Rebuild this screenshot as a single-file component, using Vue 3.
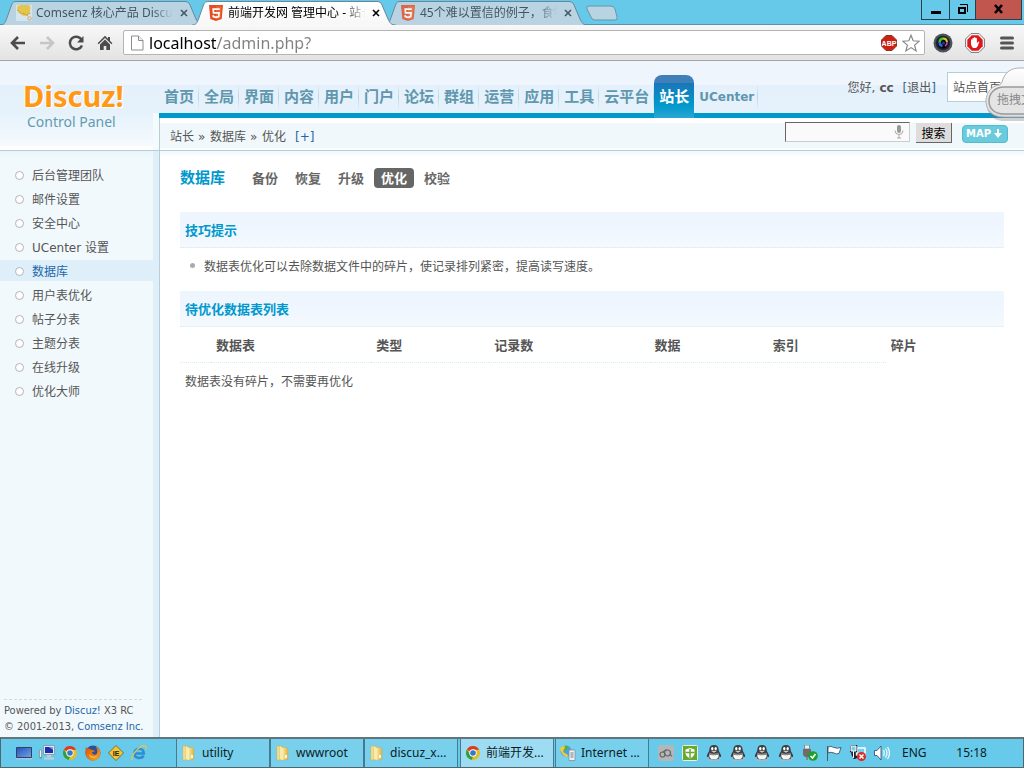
<script setup>
import { ref } from 'vue'

const browserTabs = [
  { id: 'comsenz', title: 'Comsenz 核心产品 Discuz', icon: 'note', active: false },
  { id: 'admin', title: '前端开发网 管理中心 - 站长', icon: 'html5', active: true },
  { id: 'css', title: '45个难以置信的例子，食物', icon: 'html5', active: false }
]
const navItems = ['首页', '全局', '界面', '内容', '用户', '门户', '论坛', '群组', '运营', '应用', '工具', '云平台', '站长', 'UCenter']
const menuItems = ['后台管理团队', '邮件设置', '安全中心', 'UCenter 设置', '数据库', '用户表优化', '帖子分表', '主题分表', '在线升级', '优化大师']
const subTabs = ['备份', '恢复', '升级', '优化', '校验']
const columns = ['数据表', '类型', '记录数', '数据', '索引', '碎片']
const tasks = [
  { title: 'utility', icon: 'folder' },
  { title: 'wwwroot', icon: 'folder' },
  { title: 'discuz_x...', icon: 'folder' },
  { title: '前端开发...', icon: 'chrome', active: true },
  { title: 'Internet ...', icon: 'iis' }
]
const address = ref('localhost/admin.php?')
const keyword = ref('')
</script>

<template>
  <div class="screen">
    <svg class="defs" aria-hidden="true">
      <defs>
        <linearGradient id="g-gold" x1="0" y1="0" x2="1" y2="0">
          <stop offset="0" stop-color="#fbeeb0" /><stop offset="1" stop-color="#d9b544" />
        </linearGradient>
        <linearGradient id="g-screen" x1="0" y1="0" x2="1" y2="1">
          <stop offset="0" stop-color="#2452b8" /><stop offset="1" stop-color="#6fa5ea" />
        </linearGradient>
        <linearGradient id="g-fox" x1="0" y1="0" x2="1" y2="1">
          <stop offset="0" stop-color="#d8500c" /><stop offset="1" stop-color="#f9a825" />
        </linearGradient>
        <linearGradient id="g-cloud" x1="0" y1="0" x2="0" y2="1">
          <stop offset="0" stop-color="#ffffff" /><stop offset="1" stop-color="#dcdcdc" />
        </linearGradient>
        <linearGradient id="g-tab" x1="0" y1="0" x2="0" y2="1">
          <stop offset="0" stop-color="#ffffff" /><stop offset="1" stop-color="#f7f7f7" />
        </linearGradient>
        <symbol id="i-chrome" viewBox="0 0 16 16">
          <circle cx="8" cy="8" r="7" fill="#e2bf26" />
          <path d="M8 8 1.9 4.5A7 7 0 0 1 14.1 4.7L8 4.8z" fill="#d93a2c" />
          <path d="M1.9 4.5 5.2 9.7 8 11.2 6.8 14.9A7 7 0 0 1 1.9 4.5z" fill="#2f9e49" />
          <circle cx="8" cy="8" r="3.7" fill="#fff" />
          <circle cx="8" cy="8" r="2.8" fill="#3478c8" />
        </symbol>
        <symbol id="i-folder" viewBox="0 0 16 16">
          <path d="M2 1h5v14H2z" fill="url(#g-gold)" stroke="#cfa845" stroke-width=".5" />
          <path d="M7 2.500h5l1 2v10l-6 .5z" fill="url(#g-gold)" stroke="#cfa845" stroke-width=".5" />
          <path d="m5 1 3 2v12.500L5 14z" fill="#f9eba9" />
          <path d="M10 10h2v3h-2z" fill="#eef7fd" />
        </symbol>
        <symbol id="i-html5" viewBox="0 0 14 16">
          <path d="M0 0h14l-1.300 14L7 16l-5.700-2z" fill="#e44d26" />
          <path d="M7 1.200h5.700l-1.100 11.900L7 14.700z" fill="#f16529" />
          <path d="M10.800 4.200H4.200l.3 3.700h5.600l-.4 3.700-2.700.8-2.700-.8-.1-1.500" fill="none" stroke="#fff" stroke-width="1.700" />
        </symbol>
        <symbol id="i-note" viewBox="0 0 16 16">
          <path d="M0 0h16v16H0z" fill="#dceaf2" />
          <path d="M1.500 1 5 0h8l1.500 2-.5 5-3 3.500-3.500.5L3 8 1 4z" fill="#f0c428" />
          <path d="m1 5 4.500 3.500H8l4 2.500" fill="none" stroke="#c99b23" />
          <path d="M11 9.500 14.500 8" stroke="#c99b23" fill="none" />
          <circle cx="13.500" cy="13.500" r="1.700" fill="none" stroke="#dc9a44" />
        </symbol>
        <symbol id="i-penguin" viewBox="0 0 16 16">
          <path d="M8 0C4.800 0 3.400 2 3.400 4.500c0 2.400-2.400 4-2.600 7 .2 1 1 .7 1.700-.2C3 14.700 5 15 8 15s5-.3 5.500-3.700c.7.900 1.500 1.200 1.700.2-.2-3-2.600-4.600-2.600-7C12.600 2 11.200 0 8 0z" fill="#3c3e40" />
          <path d="M3.600 9c1 1.300 7.800 1.300 8.800 0 1 3-.5 5.500-4.400 5.500S2.600 12 3.600 9z" fill="#f4f4f4" />
          <ellipse cx="6.300" cy="3.600" rx="1.200" ry="1.600" fill="#fff" /><ellipse cx="9.700" cy="3.600" rx="1.200" ry="1.600" fill="#fff" />
          <path d="M4.700 5.800h6.600L8 7.700z" fill="#c9cccd" />
          <path d="M3.300 7.600c2 1.400 7.400 1.400 9.400 0v1.700c-2 1.300-7.400 1.300-9.400 0z" fill="#878a8c" />
          <path d="M2 14.200h5v1.800H3zM9 14.200h5l-1 1.800H9z" fill="#b4b6b8" />
        </symbol>
      </defs>
    </svg>

    <header class="titlebar">
      <div class="tabs">
        <div v-for="tab in browserTabs" :key="tab.id" class="tab" :class="{ current: tab.active }">
          <svg class="tab-shape" viewBox="0 0 204 25" preserveAspectRatio="none" aria-hidden="true">
            <path d="M0 25C4 25 5 23 6.500 19L11.500 5C12.500 2 14 1.500 17 1.500H184C187 1.500 189 2 190 5L196 19C198 23 199 25 204 25" />
          </svg>
          <svg class="i16"><use :href="'#i-' + tab.icon" /></svg>
          <a href="#" class="tab-title">{{ tab.title }}</a>
          <button class="tab-close" aria-label="关闭标签页">
            <svg width="8" height="8" viewBox="0 0 8 8"><path d="m1 1 6 6M7 1 1 7" stroke="currentColor" stroke-width="1.600" /></svg>
          </button>
        </div>
        <button class="new-tab" aria-label="新标签页">
          <svg width="32" height="16" viewBox="0 0 32 16"><path d="M3 1h22q3 0 4 3l2 8q1 3-2 3H9q-3 0-4-3L1 4q-1-3 2-3z" fill="#b8d4e3" stroke="#6796ab" /></svg>
        </button>
      </div>
      <div class="window-buttons">
        <button class="win min" aria-label="最小化"><svg width="12" height="12"><path d="M1 8h10v3H1z" /></svg></button>
        <button class="win max" aria-label="还原"><svg width="12" height="12"><path d="M2 5h6v5H2z" fill="none" stroke="#000" stroke-width="2" /><path d="M3 1.500h7.500V9" fill="none" stroke="#000" /></svg></button>
        <button class="win shut" aria-label="关闭"><svg width="12" height="12"><path d="m2 2 7 8m0-8-7 8" stroke="#000" stroke-width="2.600" /></svg></button>
      </div>
    </header>

    <div class="toolbar">
      <button class="tool" aria-label="后退"><svg width="16" height="14" viewBox="0 0 16 14"><path d="M15 7H2M8 1 2 7l6 6" fill="none" stroke="#4c4c4c" stroke-width="2.600" /></svg></button>
      <button class="tool" aria-label="前进"><svg width="16" height="14" viewBox="0 0 16 14"><path d="M1 7h13M8 1l6 6-6 6" fill="none" stroke="#c6c6c6" stroke-width="2.600" /></svg></button>
      <button class="tool" aria-label="刷新"><svg width="16" height="16" viewBox="0 0 16 16"><path d="M13.500 4.500A6.300 6.300 0 1 0 14 10.500" fill="none" stroke="#4c4c4c" stroke-width="2.500" /><path d="M15.500 1v6.500H9z" fill="#4c4c4c" /></svg></button>
      <button class="tool" aria-label="主页"><svg width="16" height="16" viewBox="0 0 16 16"><path d="M8 .8.6 8.300l1 1L8 3l6.400 6.300 1-1L13 5.800V2h-2v1.800z" fill="#4c4c4c" /><path d="m8 4.500-5 5V15h3.700v-4h2.600v4H13V9.500z" fill="#4c4c4c" /></svg></button>
      <div class="omnibox">
        <svg width="14" height="16" viewBox="0 0 14 16" aria-hidden="true"><path d="M1.500 1h7L13 5.500V15H1.500z" fill="#fff" stroke="#8d8d8d" /><path d="M8.500 1v4.500H13" fill="#eee" stroke="#8d8d8d" /></svg>
        <input v-model="address" class="address" type="text" aria-label="地址" />
        <button class="plain" aria-label="广告拦截"><svg width="16" height="16" viewBox="0 0 16 16"><path d="M5 .5h6L15.500 5v6L11 15.500H5L.5 11V5z" fill="#cf2113" stroke="#8e3029" /><text x="8" y="10.500" text-anchor="middle" class="abp">ABP</text></svg></button>
        <button class="plain" aria-label="收藏"><svg width="18" height="18" viewBox="0 0 18 18"><path d="m9 1.200 2.200 5.600 6 .4-4.600 3.900 1.500 5.800L9 13.600l-5.100 3.300 1.500-5.800L.8 7.200l6-.4z" fill="#fff" stroke="#888" stroke-width="1.200" /></svg></button>
      </div>
      <button class="tool ext" aria-label="截图"><svg width="20" height="20" viewBox="0 0 20 20"><circle cx="10" cy="10" r="9.500" fill="#4d545b" /><circle cx="10" cy="10" r="7.300" fill="#23272d" /><circle cx="10" cy="10" r="5.500" fill="#05060a" /><path d="M6.500 9a4 4 0 0 1 3.500-3.500" stroke="#41c430" stroke-width="2.500" fill="none" /><path d="M10 5.500A4 4 0 0 1 14 9" stroke="#d6d02a" stroke-width="2" fill="none" /><path d="M14 9a4 4 0 0 1-2 4" stroke="#dc3ab0" stroke-width="1.500" fill="none" /><path d="M6.500 9a4 4 0 0 0 3 4" stroke="#2e68dc" stroke-width="2.500" fill="none" /><circle cx="10.500" cy="10" r="1.500" fill="#173f86" /></svg></button>
      <button class="tool ext" aria-label="AdBlock"><svg width="20" height="20" viewBox="0 0 20 20"><path d="M6 .6h8L19.400 6v8L14 19.400H6L.6 14V6z" fill="#fff" stroke="#777" /><path d="M6.700 2.300h6.600l4.400 4.400v6.600l-4.400 4.400H6.700l-4.400-4.400V6.700z" fill="#e0161a" /><path d="M6 10.500V6.700q.9-1 1.400 0V9V5.200q.8-1 1.500 0v3.300-4q.8-1 1.500 0v4-3.300q.8-1 1.500 0v5l1.300-1.500q1-.4 1.100.4L12.500 13.500 11 15H8q-2-1.500-2-4.500z" fill="#fff" /></svg></button>
      <button class="tool ext" aria-label="菜单"><svg width="14" height="14"><path d="M1.500 2h11M1.500 7h11m-11 5h11" stroke="#555" stroke-width="3" stroke-linecap="round" /></svg></button>
    </div>

    <div class="page">
      <div class="head">
        <div class="brand">
          <a href="#" class="logo">Discuz!</a>
          <span class="logo-sub">Control Panel</span>
        </div>
        <div class="head-main">
          <div class="head-top">
            <nav class="nav">
              <a v-for="item in navItems" :key="item" href="#" :class="{ on: item === '站长', latin: item === 'UCenter' }">{{ item }}</a>
            </nav>
            <p class="user">您好, <b>cc</b><a href="#">[<span>退出</span>]</a></p>
            <a href="#" class="site-home">站点首页</a>
          </div>
          <div class="crumb-bar">
            <p class="crumbs"><span>站长</span><i>»</i><span>数据库</span><i>»</i><span>优化</span><a href="#">[+]</a></p>
            <form class="search" @submit.prevent>
              <span class="search-box">
                <input v-model="keyword" type="text" aria-label="搜索关键词" />
                <svg width="10" height="14" viewBox="0 0 10 14" aria-hidden="true"><rect x="3" y="0" width="4" height="8" rx="2" fill="#999" /><path d="M1 5.500q0 4 4 4t4-4M5 9.500V13M3 13h4" fill="none" stroke="#aaa" /></svg>
              </span>
              <button class="search-btn">搜索</button>
              <button type="button" class="map">MAP<svg width="10" height="10"><path d="M4 0h2v4h3L5 9 1 4h3z" fill="#fff" /></svg></button>
            </form>
          </div>
        </div>
      </div>

      <div class="body">
        <aside class="side">
          <ul class="menu">
            <li v-for="item in menuItems" :key="item" :class="{ on: item === '数据库' }"><a href="#">{{ item }}</a></li>
          </ul>
          <p class="copy">Powered by <a href="#">Discuz!</a> X3 RC<br />© 2001-2013, <a href="#">Comsenz Inc.</a></p>
        </aside>
        <main class="main">
          <div class="title-row">
            <h1>数据库</h1>
            <nav class="sub">
              <a v-for="t in subTabs" :key="t" href="#" :class="{ on: t === '优化' }">{{ t }}</a>
            </nav>
          </div>
          <h2>技巧提示</h2>
          <ul class="tips"><li>数据表优化可以去除数据文件中的碎片，使记录排列紧密，提高读写速度。</li></ul>
          <h2>待优化数据表列表</h2>
          <table>
            <colgroup><col class="c0" /><col class="wide" /><col /><col class="wide" /><col /><col /><col /></colgroup>
            <thead><tr><th></th><th v-for="c in columns" :key="c" scope="col">{{ c }}</th></tr></thead>
            <tbody><tr><td colspan="7">数据表没有碎片，不需要再优化</td></tr></tbody>
          </table>
        </main>
      </div>

      <div class="drop-cloud">
        <svg width="48" height="62" viewBox="0 0 48 62" aria-hidden="true">
          <path d="M22 14C25 6 31 4 39 4H48V53H21C8 53 4 44 4 37C4 27 11 21 19 20Q20 17 22 14z" fill="#777" opacity=".35" transform="translate(0 3)" />
          <path d="M19 17C22 6 29 3 37 3H48V52H21C8 52 3 44 3 36C3 27 10 20 17 20z" fill="url(#g-cloud)" stroke="#b0b0b0" />
          <path d="M48 22H21C12 22 6 28 6 36S12 49 21 49H48" fill="#e4e4e4" stroke="#999" stroke-width="1.500" />
        </svg>
        <span>拖拽文</span>
      </div>
    </div>

    <footer class="taskbar">
      <div class="quick">
        <button class="plain" aria-label="显示桌面"><svg class="i16" viewBox="0 0 16 16"><path d="M.5 2.500h15v10H.5z" fill="url(#g-screen)" stroke="#33415c" /><path d="M0 13h16v1.500H0z" fill="#a9c5e5" /></svg></button>
        <button class="plain" aria-label="网络"><svg class="i16" viewBox="0 0 16 16"><path d="M4.500.5h11v9h-11z" fill="#dfe6ee" stroke="#8f9eb0" /><path d="M6 2h8v6H6z" fill="#1c2fa8" /><path d="M10 2h4v3z" fill="#7f95ea" /><path d="M8 10h4v2H8zM5 12.500h10v2H5z" fill="#c5cdd6" /><path d="M.5 5h2v8h-2z" fill="#eef1f4" stroke="#6b7d8d" stroke-width=".6" /><path d="M1 12h2v1H1z" fill="#38b845" /></svg></button>
        <button class="plain" aria-label="Chrome"><svg class="i16"><use href="#i-chrome" /></svg></button>
        <button class="plain" aria-label="Firefox"><svg class="i16" viewBox="0 0 16 16"><circle cx="8" cy="8" r="7.500" fill="#2c4f96" /><path d="M1 2c.5 1.500 1.500 1.500 3 1.500C6 5 9 5 10 6c-1 1-2 .8-3 1.500.5 2.500 3.500 3 5 1C13 6 12 3 10.500 1.500c3.500 1 5 4 5 7A7.500 7.500 0 0 1 .5 8C.3 5.500.5 3.500 1 2z" fill="url(#g-fox)" /><path d="M4 8.500c1 3 5 4.500 8 2-1.500 4-8 3.500-8-2z" fill="#f6c238" /></svg></button>
        <button class="plain" aria-label="IETester"><svg class="i16" viewBox="0 0 16 16"><path d="m8 .5 7.500 7.500L8 15.500.5 8z" fill="#f7c52c" stroke="#5c4a17" stroke-width=".7" /><text x="8" y="10.500" text-anchor="middle" class="ie-mark">IE</text></svg></button>
        <button class="plain" aria-label="Internet Explorer"><svg class="i16" viewBox="0 0 16 16"><path d="M3.500 8.500h9.300c0-6.300-9.300-6.300-9.300 0 0 5.500 7.500 5.500 9 1.900" fill="none" stroke="#2b8fd6" stroke-width="2.600" /><path d="M1.500 15C-1 12 8-.5 14.500 1c1 .5.800 2 .3 3" fill="none" stroke="#f0c447" stroke-width="1.300" /></svg></button>
      </div>
      <div class="tasks">
        <button v-for="t in tasks" :key="t.title" class="task" :class="{ current: t.active }">
          <svg v-if="t.icon !== 'iis'" class="i16"><use :href="'#i-' + t.icon" /></svg>
          <svg v-else class="i16" viewBox="0 0 16 16"><circle cx="6" cy="6" r="5.500" fill="#4aa2dc" /><path d="M2 3q4-4 7-1L5 6z" fill="#58ad3f" /><path d="M0 4q3-5 5-2L3 7l5 3-1 2Q2 11 0 4z" fill="#f1cc35" /><path d="M9 5h6v10.500H9z" fill="#eef0f2" stroke="#83909c" stroke-width=".8" /><path d="M10.500 8h3m-3 2h3m-3 2h3" stroke="#6c7b88" /></svg>
          <span>{{ t.title }}</span>
        </button>
      </div>
      <div class="tray">
        <svg class="i16" viewBox="0 0 16 16"><rect width="16" height="16" rx="2" fill="#b4b7b8" /><circle cx="4.500" cy="9.500" r="2.500" fill="none" stroke="#666" stroke-width="1.200" /><circle cx="9.500" cy="8" r="3" fill="none" stroke="#666" stroke-width="1.200" /><path d="M5 7 8.500 4.500M12 9l2 2.500" fill="none" stroke="#666" stroke-width="1.200" /></svg>
        <svg class="i16" viewBox="0 0 16 16"><rect x=".5" y=".5" width="15" height="15" rx="1" fill="#68a82f" stroke="#e6f3d7" /><path d="M3.500 4.500 8 3l4.500 1.500V8q0 3-4.500 5.500Q3.500 11 3.500 8z" fill="#fff" /><path d="M8 4v9M3.500 7.500h9" stroke="#68a82f" stroke-width="1.500" /></svg>
        <svg v-for="n in 4" :key="n" class="i16"><use href="#i-penguin" /></svg>
        <svg class="i16" viewBox="0 0 16 16"><path d="M2.500 0h5v4h-5z" fill="#eee" stroke="#777" stroke-width=".8" /><path d="M1 4h8v6l-2 2H3l-2-2z" fill="#6d6d6d" /><path d="M4 12h2v3H4z" fill="#888" /><circle cx="11" cy="11" r="4.800" fill="#1f9e2d" /><path d="m8.500 11 2 2 3-4" fill="none" stroke="#fff" stroke-width="1.500" /></svg>
        <svg class="i16" viewBox="0 0 16 16"><path d="M1.500 1v15M2 2q3-1.500 6 .5 3 1.500 7 0l-2 6q-3 1-5-.5-3-1.500-6 0z" fill="#fff" stroke="#345" stroke-width=".8" /></svg>
        <svg class="i16" viewBox="0 0 16 16"><path d="M7 3h8v7H7z" fill="#76cfea" stroke="#fff" stroke-width="1.500" /><path d="M1 1h5v5H4.500v8M2.500 6v3q0 3 6 3M1 1v5h3" fill="none" stroke="#223" stroke-width="2.400" /><path d="M1 1h5v5H1zM3.500 6v7" fill="#76cfea" stroke="#fff" stroke-width="1" /><circle cx="11.500" cy="11.500" r="4.500" fill="#dc2b27" /><path d="m9.500 9.500 4 4m0-4-4 4" stroke="#fff" stroke-width="1.500" /></svg>
        <svg class="i16" viewBox="0 0 16 16"><path d="M.5 5.500H3l4-4.500v14L3 10.500H.5z" fill="#fff" stroke="#345" stroke-width=".8" /><path d="M9.500 5q1.500 3 0 6M11.500 3.500q3 4.500 0 9M13.500 2q4 6 0 12" fill="none" stroke="#f6fbfd" stroke-width="1.200" /></svg>
        <span class="lang">ENG</span>
        <time class="clock">15:18</time>
      </div>
    </footer>
  </div>
</template>

<style>
body { margin: 0; }
</style>

<style scoped>
.screen {
  position: relative;
  display: flex;
  flex-direction: column;
  min-height: 100vh;
  overflow: hidden;
  background: #fff;
  color: #555;
  font: 12px/16px "DejaVu Sans", "Noto Sans CJK SC", sans-serif;
}
.screen * { box-sizing: border-box; }
.defs { position: absolute; width: 0; height: 0; }
a { color: inherit; text-decoration: none; }
p, ul, h1, h2 { margin: 0; padding: 0; list-style: none; }
button { padding: 0; border: 0; background: none; font: inherit; color: inherit; }
svg { flex: none; display: block; }
.i16 { width: 16px; height: 16px; }

.titlebar { display: flex; justify-content: space-between; height: 25px; background: #67c9ea; border-bottom: 1px solid #5795ab; }
.tabs { display: flex; }
.tab { position: relative; display: flex; align-items: center; width: 204px; height: 25px; margin-right: -12px; padding: 1px 16px 0; color: #44565f; }
.tab.current { z-index: 1; color: #000; }
.tab-shape { position: absolute; left: 0; top: 0; width: 100%; height: 25px; }
.tab-shape path { fill: #b9d3e2; stroke: #67889a; }
.tab.current .tab-shape path { fill: url(#g-tab); }
.tab > .i16, .tab-title, .tab-close { position: relative; }
.tab-title {
  flex: 1;
  margin: 0 7px 0 4px;
  overflow: hidden;
  white-space: nowrap;
  font: 12px/18px "Noto Sans", "Noto Sans CJK SC", sans-serif;
  -webkit-mask-image: linear-gradient(90deg, #000 85%, transparent);
  mask-image: linear-gradient(90deg, #000 85%, transparent);
}
.tab:not(.current) > .i16 { opacity: .8; }
.new-tab { margin: 5px 0 0 10px; height: 16px; }
.window-buttons { display: flex; height: 20px; margin-right: 2px; border: 1px solid #26404c; border-top: 0; }
.win { display: flex; align-items: center; justify-content: center; width: 28px; padding-bottom: 2px; border-right: 1px solid #26404c; }
.win.max { width: 26px; }
.win.shut { width: 45px; border: 0; background: #c1564f; }

.toolbar { display: flex; align-items: center; height: 36px; padding: 0 1px 0 3px; background: linear-gradient(#f8f8f8, #e3e3e3); border-bottom: 1px solid #a5a5a5; }
.tool { display: flex; align-items: center; justify-content: center; width: 29px; height: 24px; }
.omnibox { display: flex; flex: 1; align-items: center; height: 25px; margin: 0 2px 0 4px; padding: 0 4px 0 6px; background: #fff; border: 1px solid #b4b4b4; border-radius: 2px; gap: 5px; }
.address {
  flex: 1;
  min-width: 0;
  height: 22px;
  padding: 0;
  border: 0;
  outline: 0;
  font: 16px/22px "Noto Sans", sans-serif;
  color: #222;
  background: linear-gradient(90deg, #000 67px, #808080 67px);
  -webkit-background-clip: text;
  background-clip: text;
  -webkit-text-fill-color: transparent;
}
.abp { font: bold 7px "Liberation Sans", sans-serif; fill: #fff; }
.ie-mark { font: bold 7px "Liberation Sans", sans-serif; fill: #222; }
.tool.ext { width: 32px; }

.page { position: relative; display: flex; flex: 1; flex-direction: column; }
.head { display: flex; height: 90px; border-bottom: 1px solid #b5cfd9; background: linear-gradient(#eef5fc 24px, #e4f0fb 24px, #e6f2fb 52px, #f5fafd 85px, #fff 85px); }
.brand { display: flex; flex-direction: column; width: 153px; padding: 15px 0 0 23px; }
.logo { font: bold 29px/40px "Noto Sans", sans-serif; color: #ff9813; text-shadow: 1px 1px 0 #fff, -1px 0 0 #fff; }
.logo-sub { padding-left: 4px; font: 14px/20px "Noto Sans", sans-serif; color: #639bb0; margin-top: -4px; }
.head-main { flex: 1; min-width: 0; display: flex; flex-direction: column; padding-left: 6px; background: linear-gradient(90deg, #f5fafd 6px, transparent 6px) 0 52px no-repeat; }
.head-top { display: flex; height: 57px; border-bottom: 5px solid #09c; border-left: 0; }
.nav { display: flex; align-self: flex-end; height: 43px; margin-bottom: -5px; font-size: 15px; line-height: 24px; font-weight: bold; color: #6097ae; }
.nav a { height: 24px; margin-top: 10px; padding: 0 4px 0 5px; border-right: 1px solid; border-image: linear-gradient(transparent, #b9d8e4, transparent) 1; white-space: nowrap; }
.nav a.on { height: 43px; margin: 0; padding: 10px 5px 9px; border: 0; border-radius: 8px 8px 0 0; color: #fff; background: linear-gradient(#3f7fba 8px, #1976b8 8px, #09c 30px, #2aa6d4); }
.nav a.latin { padding: 0 3px 0 5px; font-size: 12px; }
.user { display: flex; gap: 4px; margin: 19px 11px 0 auto; white-space: nowrap; }
.user a { margin-left: 5px; color: #369; }
.user a span { color: #555; }
.site-home { width: 68px; height: 30px; margin: 11px 9px 0 0; padding: 7px 5px; border: 1px solid #b5cfd9; background: #fff; white-space: nowrap; }
.crumb-bar { display: flex; align-items: center; justify-content: space-between; height: 32px; padding: 0 16px 0 10px; border-left: 1px solid #b5cfd9; background: linear-gradient(#fff 5px, #f0f8fc 5px, #f0f8fc 30px, #fff 30px); }
.crumbs { display: flex; gap: 4px; padding-top: 5px; }
.crumbs i { width: 8px; font-style: normal; }
.crumbs a { margin-left: 5px; color: #2366a8; }
.search { display: flex; align-items: flex-start; height: 24px; }
.search-box { display: flex; align-items: center; width: 125px; height: 20px; margin-right: 6px; padding-right: 5px; background: #fafafa; border: 1px solid; border-color: #666 #ccc #ccc #666; }
.search-box input { flex: 1; min-width: 0; height: 16px; padding: 0 2px; border: 0; outline: 0; background: none; font: inherit; }
.search-btn { width: 36px; height: 20px; margin: 1px 10px 0 0; padding-top: 2px; background: #ddd; border-right: 1px solid #666; border-bottom: 1px solid #666; color: #000; }
.map { display: flex; align-items: center; gap: 2px; width: 46px; height: 18px; margin-top: 3px; padding: 0 3px; border: 1px solid #52bbcf; border-radius: 4px; background: #6acbdc; color: #fff; font-size: 10px; font-weight: bold; }

.body { display: flex; flex: 1; }
.side { display: flex; flex-direction: column; justify-content: space-between; width: 160px; padding: 13px 6px 2px 0; border-right: 1px solid #b5cfd9; background: linear-gradient(90deg, transparent 153px, #deeffa 153px), linear-gradient(#e8f4fb, #f2f9fd 8px); }
.menu li { display: flex; gap: 8px; height: 21px; margin-bottom: 3px; padding-left: 15px; line-height: 25px; }
.menu li::before { content: ""; width: 7px; height: 7px; margin-top: 7px; border: 1px solid #b0b5b8; border-radius: 50%; background: #fff; }
.menu li.on { background: #deeffa; color: #1d68aa; }
.copy { margin: 0 11px 0 4px; padding-top: 3px; border-top: 1px dashed #d2dade; font: 11px/16px "DejaVu Sans Condensed", "DejaVu Sans", sans-serif; white-space: nowrap; }
.copy a { color: #2366a8; }
.main { flex: 1; min-width: 0; padding: 17px 20px 0; background: linear-gradient(#f0f8fd, #fff 6px); }
.title-row { display: flex; align-items: center; gap: 20px; height: 20px; margin-bottom: 24px; }
h1 { font-size: 15px; line-height: 22px; color: #09c; }
.sub { display: flex; gap: 3px; }
.sub a { height: 20px; padding: 0 7px; border-radius: 4px; font-size: 13px; line-height: 22px; font-weight: bold; color: #666; }
.sub a.on { background: #666; color: #fff; }
h2 { height: 36px; padding: 0 5px; border-bottom: 1px dotted #d6eaf8; background: linear-gradient(#edf5fd, #f0f6ff 50%, #f4f9fd); font-size: 13px; line-height: 38px; color: #09c; }
.tips { padding: 8px 0 15px 10px; }
.tips li { display: flex; gap: 9px; height: 20px; line-height: 22px; }
.tips li::before { content: ""; width: 5px; height: 5px; margin-top: 7px; border-radius: 50%; background: #aaa; }
table { width: 100%; table-layout: fixed; border-collapse: separate; border-spacing: 0; }
col { width: 14.9%; }
col.c0 { width: 31px; }
col.wide { width: 20.2%; }
th { height: 36px; padding: 2px 5px 0; border-bottom: 1px dotted #d6eaf8; text-align: left; font-size: 13px; }
th:last-child { border: 0; }
td { height: 36px; padding: 2px 5px 0; }

.drop-cloud { position: absolute; right: -7px; top: 4px; width: 48px; color: #888; }
.drop-cloud span { position: absolute; left: 14px; top: 27px; white-space: nowrap; }

.taskbar { display: flex; height: 31px; border: 1px solid #4e6670; border-top: 2px solid #62757d; background: #67caeb; color: #0c1c24; font: 12px/18px "Noto Sans", "Noto Sans CJK SC", sans-serif; }
.quick { display: flex; align-items: center; gap: 7px; width: 175px; padding-left: 15px; }
.tasks { display: flex; }
.task { display: flex; align-items: center; gap: 5px; width: 94px; height: 28px; padding-left: 4px; border-left: 1px solid #447b90; border-right: 1px solid #447b90; background: #78d0ed; white-space: nowrap; overflow: hidden; }
.task.current { margin: 0 1px 0 2px; background: #9edcf3; }
.tray { display: flex; flex: 1; align-items: center; gap: 8px; padding-left: 9px; }
.lang { margin-left: 4px; }
.clock { margin-left: auto; padding-right: 36px; }
</style>
